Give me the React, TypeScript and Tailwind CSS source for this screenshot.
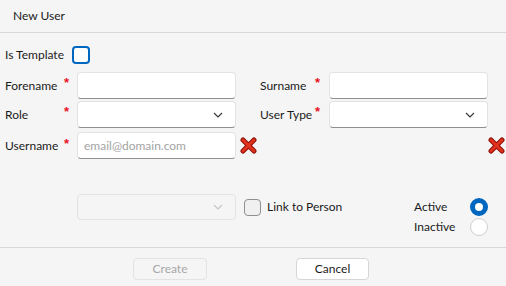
import React from 'react';

const font = { fontFamily: '"Segoe UI", Lato, "Liberation Sans", sans-serif' };

function Req() {
  return (
    <span className="shrink-0 text-[#e81123] text-[13px] font-bold leading-none self-start mt-[4px] font-['Liberation_Sans',sans-serif]">
      *
    </span>
  );
}

function Chevron({ light }: { light?: boolean }) {
  return (
    <svg width="10" height="6" viewBox="0 0 10 6" className="shrink-0">
      <path d="M1 1 L5 5 L9 1" fill="none" stroke={light ? '#c4c4c4' : '#333'} strokeWidth="1.1" />
    </svg>
  );
}

function RedX() {
  return (
    <svg width="17" height="17" viewBox="0 0 17 17" className="shrink-0">
      <path d="M3 3 L14 14 M14 3 L3 14" stroke="#8c1006" strokeWidth="5" strokeLinecap="round" />
      <path d="M3 3 L14 14 M14 3 L3 14" stroke="#e0301e" strokeWidth="3" strokeLinecap="round" />
    </svg>
  );
}

const field = 'shrink-0 w-[159px] h-[27px] bg-white rounded-[4px] border border-[#e3e3e3] border-b-[#8f8f8f]';
const lbl = 'shrink-0 whitespace-nowrap';

export default function App() {
  return (
    <div className="w-[506px] h-[286px] bg-[#f5f5f5] text-[12px] text-[#1b1b1b] overflow-hidden" style={font}>
      <div className="h-[33px] border-b border-[#d8d8d8] flex items-center pl-[13px]">New User</div>

      <div className="h-[214px] pl-[5px] pt-[13px]">
        <div className="flex items-center h-[18px]">
          <span className={`${lbl} w-[67px]`}>Is Template</span>
          <span className="shrink-0 w-[18px] h-[18px] rounded-[4px] border-2 border-[#0067c0] bg-white" />
        </div>

        <div className="flex items-center mt-[8px]">
          <div className="shrink-0 w-[72px] flex h-[27px] items-center">
            <span className={`${lbl} w-[59px]`}>Forename</span>
            <Req />
          </div>
          <div className={field} />
          <div className="shrink-0 w-[69px] ml-[24px] flex h-[27px] items-center">
            <span className={`${lbl} w-[55px]`}>Surname</span>
            <Req />
          </div>
          <div className={field} />
        </div>

        <div className="flex items-center mt-[2px]">
          <div className="shrink-0 w-[72px] flex h-[27px] items-center">
            <span className={`${lbl} w-[59px]`}>Role</span>
            <Req />
          </div>
          <div className={`${field} flex items-center justify-end pr-[12px]`}>
            <Chevron />
          </div>
          <div className="shrink-0 w-[69px] ml-[24px] flex h-[27px] items-center">
            <span className={`${lbl} w-[55px]`}>User Type</span>
            <Req />
          </div>
          <div className={`${field} flex items-center justify-end pr-[12px]`}>
            <Chevron />
          </div>
        </div>

        <div className="flex items-center mt-[4px]">
          <div className="shrink-0 w-[72px] flex h-[26px] items-center">
            <span className={`${lbl} w-[59px]`}>Username</span>
            <Req />
          </div>
          <div className={`${field} h-[26px] flex items-center pl-[6px] text-[#a3a3a3]`}>email@domain.com</div>
          <div className="ml-[4px]"><RedX /></div>
          <div className="ml-auto mr-[1px]"><RedX /></div>
        </div>

        <div className="flex items-start mt-[35px]">
          <div className="shrink-0 w-[72px]" />
          <div className="shrink-0 w-[159px] h-[26px] rounded-[4px] border border-[#e3e3e3] flex items-center justify-end pr-[12px]">
            <Chevron light />
          </div>
          <div className="flex items-center h-[26px] ml-[8px]">
            <span className="shrink-0 w-[17px] h-[17px] rounded-[4px] border border-[#8e8e8e] bg-[#f0f0f0]" />
            <span className={`${lbl} ml-[6px]`}>Link to Person</span>
          </div>
          <div className="ml-auto mr-[18px] mt-[4px] flex flex-col gap-[2px]">
            <div className="flex items-center h-[18px]">
              <span className={`${lbl} w-[56px]`}>Active</span>
              <span className="shrink-0 w-[18px] h-[18px] rounded-full border-[5px] border-[#0067c0] bg-white" />
            </div>
            <div className="flex items-center h-[18px]">
              <span className={`${lbl} w-[56px]`}>Inactive</span>
              <span className="shrink-0 w-[18px] h-[18px] rounded-full border border-[#cfcfcf] bg-white" />
            </div>
          </div>
        </div>
      </div>

      <div className="border-t border-[#d8d8d8] flex items-start pt-[10px]">
        <button className="ml-[133px] w-[74px] h-[22px] rounded-[4px] border border-[#e3e3e3] bg-[#f5f5f5] text-[#a8a8a8]">Create</button>
        <button className="ml-[89px] w-[73px] h-[22px] rounded-[4px] border border-[#d6d6d6] bg-white text-[#1b1b1b]">Cancel</button>
      </div>
    </div>
  );
}
